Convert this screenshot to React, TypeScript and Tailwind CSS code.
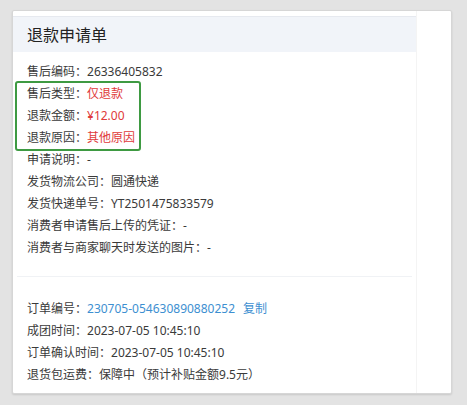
import React from 'react';

const font = { fontFamily: '"Noto Sans", "Noto Sans CJK SC", sans-serif' };

function Row({ label, children }: { label: string; children: React.ReactNode }) {
  return (
    <div className="h-[22px] flex items-center text-[12px] text-[#3a3a3a]">
      <span>{label}：</span>
      {children}
    </div>
  );
}

export default function App() {
  return (
    <div className="w-[467px] h-[405px] bg-[#e3e3e3] pt-[10px] pl-[12px]" style={font}>
      <div className="w-[440px] h-[384px] bg-white border border-[#d6d6d6] rounded-[2px] shadow-[0_1px_2px_rgba(0,0,0,0.12)] flex">
        <div className="w-[403px] flex flex-col">
          {/* header */}
          <div className="mt-[5px] h-[36px] bg-[#f1f4f9] border-t border-[#e6e9ef] flex items-center pl-[14px]">
            <h1 className="text-[16px] text-[#222]">退款申请单</h1>
          </div>

          <div className="pl-[14px] pt-[9px]">
            <Row label="售后编码">
              <span>26336405832</span>
            </Row>
            <div className="-ml-[12px] -my-[2px] w-[126px] pl-[10px] border-2 border-[#3e9a42] rounded-[3px]">
              <Row label="售后类型">
                <span className="text-[#e03a3a]">仅退款</span>
              </Row>
              <Row label="退款金额">
                <span className="text-[#e03a3a]">¥12.00</span>
              </Row>
              <Row label="退款原因">
                <span className="text-[#e03a3a]">其他原因</span>
              </Row>
            </div>
            <Row label="申请说明">
              <span>-</span>
            </Row>
            <Row label="发货物流公司">
              <span>圆通快递</span>
            </Row>
            <Row label="发货快递单号">
              <span>YT2501475833579</span>
            </Row>
            <Row label="消费者申请售后上传的凭证">
              <span>-</span>
            </Row>
            <Row label="消费者与商家聊天时发送的图片">
              <span>-</span>
            </Row>
          </div>

          <div className="mt-[17px] mx-[4px] border-t border-[#f0f2f5]" />

          <div className="pl-[14px] pt-[21px]">
            <Row label="订单编号">
              <span className="text-[#3d8fd1]">230705-054630890880252</span>
              <span className="ml-[8px] text-[#3d8fd1]">复制</span>
            </Row>
            <Row label="成团时间">
              <span>2023-07-05 10:45:10</span>
            </Row>
            <Row label="订单确认时间">
              <span>2023-07-05 10:45:10</span>
            </Row>
            <Row label="退货包运费">
              <span>保障中（预计补贴金额9.5元）</span>
            </Row>
          </div>
        </div>
        <div className="flex-1 border-l border-[#f4f4f4]" />
      </div>
    </div>
  );
}
